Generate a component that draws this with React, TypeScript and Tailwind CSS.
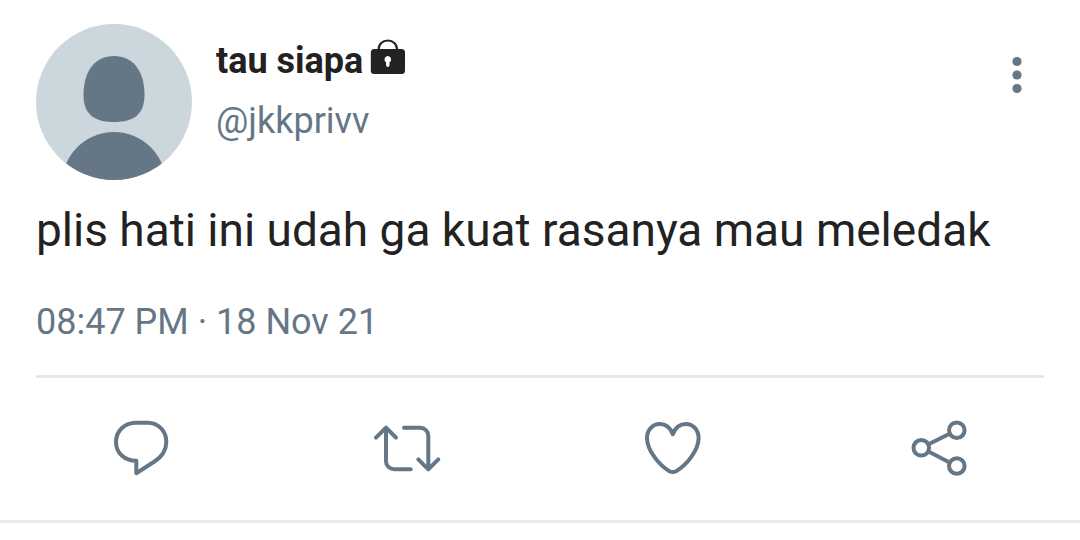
import type { ReactNode } from "react";

type ActionProps = {
	label: string;
	children: ReactNode;
};

function Action({ label, children }: ActionProps) {
	return (
		<button type="button" aria-label={label} className="flex flex-1 cursor-pointer justify-center pt-[34px] pb-9">
			<svg className="size-18" viewBox="0 0 72 72" fill="none" stroke="currentColor" strokeWidth="4" strokeLinecap="round" strokeLinejoin="round">
				{children}
			</svg>
		</button>
	);
}

function Avatar() {
	return (
		<svg className="size-39 shrink-0 rounded-full bg-[#ccd6dd] text-[#657786]" viewBox="0 0 156 156" fill="currentColor">
			<path d="M78 32C97 32 108.5 47 108.5 71C108.5 90 98 98 78 98C58 98 47.5 90 47.5 71C47.5 47 59 32 78 32Z" />
			<circle cx="78" cy="160" r="52" />
		</svg>
	);
}

function LockIcon() {
	return (
		<svg className="size-9" viewBox="0 0 36 36" fill="none">
			<path d="M8.6 11V10.5C8.6 5.2 12.6 1.5 17.8 1.5S27 5.2 27 10.5V11" stroke="currentColor" strokeWidth="2.2" />
			<rect x="0.8" y="10" width="34.2" height="25" rx="3.5" fill="currentColor" />
			<path d="M17.8 17a3.4 3.4 0 0 1 1.7 6.3V26.2a1.7 1.7 0 0 1-3.4 0V23.3A3.4 3.4 0 0 1 17.8 17Z" fill="white" />
		</svg>
	);
}

export default function App() {
	return (
		<article className="border-b-3 border-[#ebebeb] bg-white font-[Roboto,sans-serif] text-[#222222]">
			<div className="px-9 pt-6">
				<header className="flex items-start gap-6">
					<Avatar />
					<div className="flex flex-1 flex-col gap-4 pt-[15px] text-4xl">
						<h1 className="flex items-start gap-[7px] leading-11 font-bold">
							tau siapa
							<LockIcon />
						</h1>
						<a href="#profile" className="self-start leading-11 text-[#657786]">
							@jkkprivv
						</a>
					</div>
					<button type="button" aria-label="More" className="cursor-pointer pt-8 pr-5 text-[#657786]">
						<svg className="h-10 w-3.5" viewBox="0 0 14 40" fill="currentColor">
							<circle cx="7" cy="5.5" r="4.6" />
							<circle cx="7" cy="19" r="4.6" />
							<circle cx="7" cy="32.5" r="4.6" />
						</svg>
					</button>
				</header>

				<p className="mt-[22px] text-[46px] leading-14">plis hati ini udah ga kuat rasanya mau meledak</p>

				<time dateTime="2021-11-18T20:47" className="mt-11 block border-b-3 border-[#e6e8e8] pb-[33px] text-4xl leading-10 text-[#657786]">
					08:47 PM · 18 Nov 21
				</time>
			</div>

			<footer className="flex px-2 text-[#657786]">
				<Action label="Reply">
					<path d="M31.3 48.8V61.3L49.5 49.5C56.5 45 61.3 38.5 61.3 30C61.3 18.8 53 10.8 43 10.8H31C19.5 10.8 11 19 11 30C11 41 19.5 48.8 31.3 48.8Z" />
				</Action>
				<Action label="Retweet">
					<path d="M5 25.7L15 15.7L25 25.7M15 16V49.3A8 8 0 0 0 23 57.3H39.7" />
					<path d="M33 15.7H49.3A8 8 0 0 1 57.3 23.7V57M47.3 47.3L57.3 57.3L67.3 47.3" />
				</Action>
				<Action label="Like">
					<path d="M35.8 22.3C33.5 16.3 28.8 12 22.8 12C15.2 12 10 18.2 10 26C10 38.5 22.5 53.5 32.5 59.2Q35.8 60.8 39.1 59.2C49.1 53.5 61.6 38.5 61.6 26C61.6 18.2 56.4 12 48.8 12C42.8 12 38.1 16.3 35.8 22.3Z" />
				</Action>
				<Action label="Share">
					<circle cx="18.3" cy="35.8" r="7.8" />
					<circle cx="53.8" cy="18.2" r="7.8" />
					<circle cx="53.8" cy="54" r="7.8" />
					<path d="M25.5 32.2L46.6 21.8M25.5 39.4L46.6 50.4" />
				</Action>
			</footer>
		</article>
	);
}
